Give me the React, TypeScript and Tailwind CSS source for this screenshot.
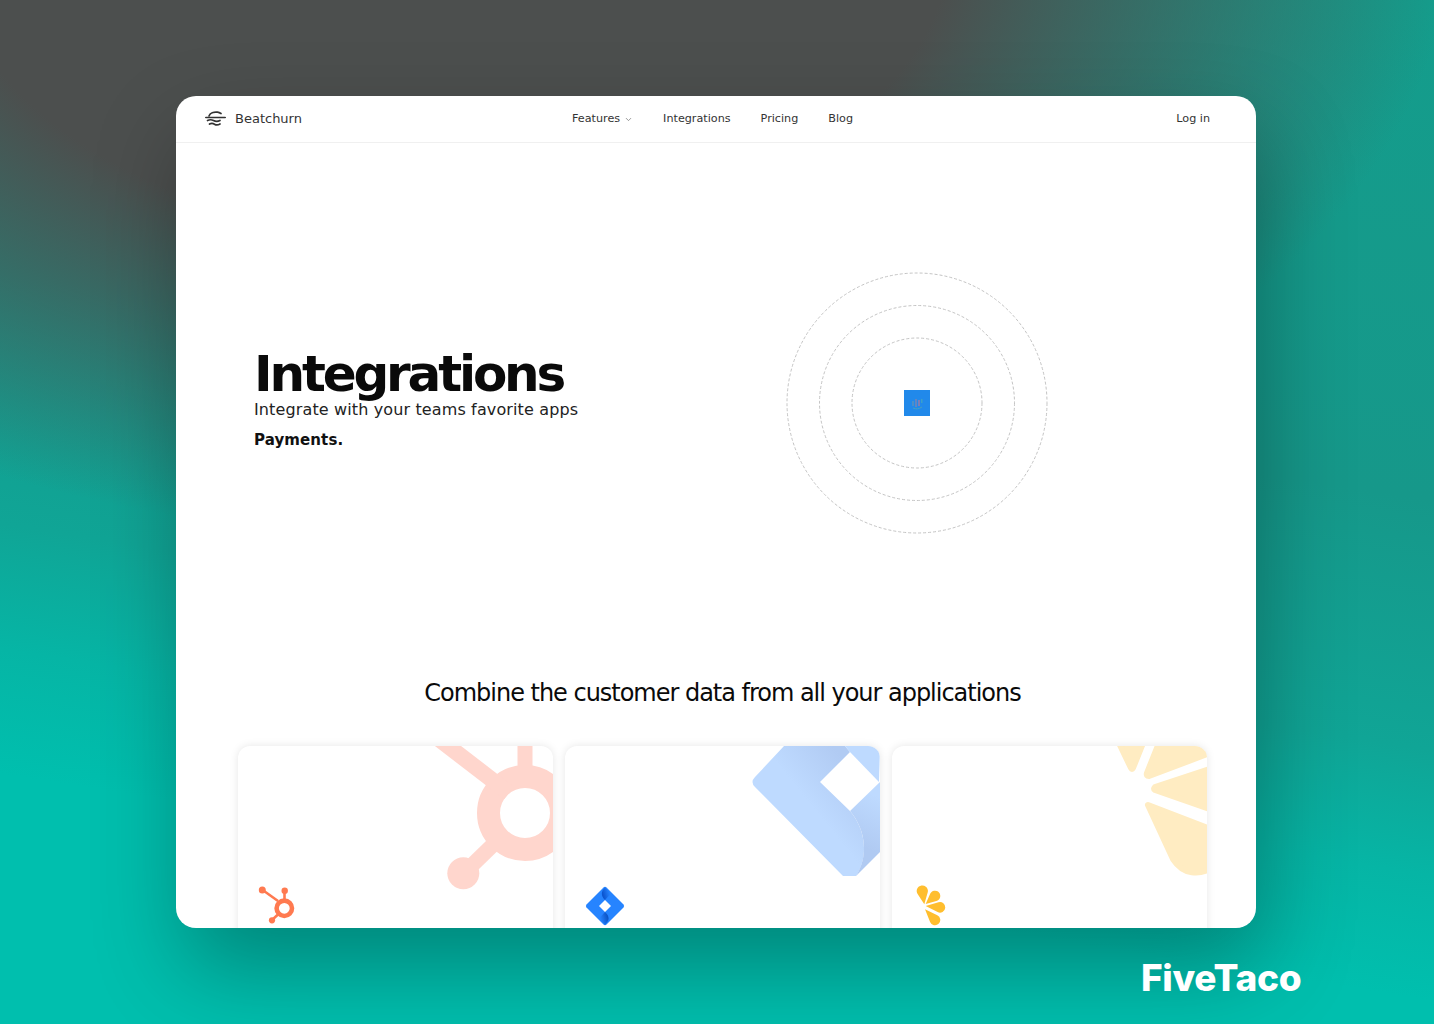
import React from "react";
import { ChevronDown } from "lucide-react";

// teardrop path: tip + circle, with tangents worked out from the tip
const tear = (cx: number, cy: number, r: number, tx: number, ty: number) => {
  const dx = cx - tx;
  const dy = cy - ty;
  const d = Math.hypot(dx, dy);
  const a = Math.atan2(dy, dx);
  const b = Math.asin(r / d);
  const l = Math.sqrt(d * d - r * r);
  const p1 = [tx + l * Math.cos(a - b), ty + l * Math.sin(a - b)];
  const p2 = [tx + l * Math.cos(a + b), ty + l * Math.sin(a + b)];
  return `M${tx} ${ty}L${p1[0]} ${p1[1]}A${r} ${r} 0 1 1 ${p2[0]} ${p2[1]}Z`;
};

const Logo = () => (
  <svg width="21" height="16" viewBox="0 0 21 16" fill="none" stroke="#333" strokeWidth="1.7" strokeLinecap="round">
    <path d="M4 5C5 2 9 .8 12.5 1.2c1.500.2 2.500.7 3.500 1.300" />
    <path d="M.8 6.500h19.400" />
    <path d="M2.500 9.500c2.500-1.200 4-1 6 0s4 1.200 6.500 0" />
    <path d="M4.500 13c2-1 3.500-.8 5 .2s3.500 1 5.500-.2" />
  </svg>
);

const BlueIcon = () => (
  <svg width="26" height="26" viewBox="0 0 26 26">
    <rect width="26" height="26" fill="#2189ea" />
    <rect x="8" y="11" width="2" height="5" fill="#4a8fc9" />
    <rect x="11" y="9" width="2" height="8" fill="#5f86c4" />
    <rect x="14" y="10" width="2" height="6" fill="#7c7fb8" />
    <rect x="17" y="9" width="1.500" height="4" fill="#3ba0c8" />
    <path d="M9 18c3 1.500 6 1 9-1" stroke="#45a0c0" strokeWidth="1" fill="none" />
  </svg>
);

const Rings = () => (
  <svg width="262" height="262" viewBox="0 0 262 262" fill="none" stroke="#c4c4c4" strokeWidth="1" strokeDasharray="3 2">
    <circle cx="131" cy="131" r="130" />
    <circle cx="131" cy="131" r="97.500" />
    <circle cx="131" cy="131" r="65" />
  </svg>
);

const HubspotBig = () => (
  <svg className="absolute top-0 left-0" width="315" height="150" viewBox="0 0 315 150" fill="none" stroke="#ffd6cd">
    <circle cx="287" cy="67" r="36.500" strokeWidth="23" />
    <path d="M287 0v24" strokeWidth="15" />
    <path d="M197 -10l74 57" strokeWidth="16" />
    <path d="M262 92l-36 35" strokeWidth="15" />
    <circle cx="225.300" cy="127.300" r="16" fill="#ffd6cd" stroke="none" />
  </svg>
);

const HubspotSmall = () => (
  <svg width="40" height="40" viewBox="0 0 40 40" fill="none" stroke="#ff7a50">
    <circle cx="26.300" cy="22.300" r="7.700" strokeWidth="4.600" />
    <path d="M26.500 6v9" strokeWidth="2.600" />
    <path d="M6 5l14 10" strokeWidth="2.600" />
    <path d="M20.500 28l-7 6.500" strokeWidth="2.600" />
    <circle cx="4.300" cy="4" r="3.500" fill="#ff7a50" stroke="none" />
    <circle cx="26.700" cy="4.700" r="3.200" fill="#ff7a50" stroke="none" />
    <circle cx="14" cy="34.300" r="3.100" fill="#ff7a50" stroke="none" />
  </svg>
);

const JiraBig = () => (
  <svg className="absolute top-0 left-0" width="315" height="130" viewBox="0 0 315 130">
    <defs>
      <linearGradient id="jiraTop" gradientUnits="userSpaceOnUse" x1="232" y1="42" x2="274" y2="8">
        <stop offset="0" stopColor="#bedaff" />
        <stop offset="1" stopColor="#b1cbf3" />
      </linearGradient>
      <linearGradient id="jiraRight" gradientUnits="userSpaceOnUse" x1="312" y1="50" x2="288" y2="95">
        <stop offset="0" stopColor="#bedaff" />
        <stop offset="1" stopColor="#b0caf2" />
      </linearGradient>
    </defs>
    <path d="M219 0L190 31Q185 36 190 41L278 130H291C303 112 302 85 285 65L255 36L285 6L280 0Z" fill="url(#jiraTop)" />
    <path d="M280 0L285 6L314 36L315 0Z" fill="#bedaff" />
    <path d="M285 65L315 36V106L291 130C303 112 302 85 285 65Z" fill="url(#jiraRight)" />
  </svg>
);

const JiraSmall = () => (
  <svg width="40" height="40" viewBox="0 0 40 40">
    <defs>
      <linearGradient id="jiraA" gradientUnits="userSpaceOnUse" x1="18" y1="9" x2="25" y2="7">
        <stop offset="0" stopColor="#0b55d0" />
        <stop offset="1" stopColor="#2684ff" />
      </linearGradient>
      <linearGradient id="jiraB" gradientUnits="userSpaceOnUse" x1="23" y1="31" x2="15" y2="33">
        <stop offset="0" stopColor="#0b52c4" />
        <stop offset="1" stopColor="#2684ff" />
      </linearGradient>
    </defs>
    <path d="M18.500 1.500Q20 .2 21.500 1.500L38.500 18.500Q39.800 20 38.500 21.500L21.500 38.500Q20 39.800 18.500 38.500L1.500 21.500Q.2 20 1.500 18.500Z" fill="#2684ff" />
    <path d="M20 14C15.500 10 16 5 20 1.500L26 7.500Z" fill="url(#jiraA)" />
    <path d="M20 26C25 30.500 24.500 34.500 20 38.500L14 32.500Z" fill="url(#jiraB)" />
    <path d="M20 14L26 20L20 26L14 20Z" fill="#fff" />
  </svg>
);

const LemonBig = () => (
  <svg className="absolute top-0 left-0" width="315" height="130" viewBox="0 0 315 130" fill="#ffecc2" stroke="#ffecc2" strokeWidth="6" strokeLinejoin="round">
    <path d="M227 -3H251L241 22Q240 24 239 22Z" />
    <path d="M267 -3H318V7L257 30Q254 30 255 27Z" />
    <path d="M318 23V63L263 44Q261 43 263 41Z" />
    <path d="M256 59L318 83V123C308 128 292 130 281 113Z" />
  </svg>
);

const LemonSmall = () => (
  <svg width="32" height="42" viewBox="0 0 32 42" fill="#ffbe2e">
    <path d={tear(7.3, 6, 5.6, 9.3, 19.3)} />
    <path d={tear(20, 11, 5.3, 10.7, 19)} />
    <path d={tear(25, 22.3, 5.3, 10.7, 21)} />
    <path d={tear(20, 35, 5.3, 10, 24.3)} />
  </svg>
);

const cards = [
  { big: <HubspotBig />, small: <HubspotSmall />, pos: "ml-[20px] mt-[140px]" },
  { big: <JiraBig />, small: <JiraSmall />, pos: "ml-[20px] mt-[140px]" },
  { big: <LemonBig />, small: <LemonSmall />, pos: "ml-[23px] mt-[139px]" },
];

export default function App() {
  return (
    <div className="relative h-[1024px] w-[1434px] overflow-hidden bg-[radial-gradient(ellipse_1000px_600px_at_450px_-60px,#4c4f4e_0%,#4c4f4e_50%,rgba(76,79,78,0)_100%),linear-gradient(189deg,#149d8c_0%,#16988a_40%,#10a596_60%,#06b5a5_70%,#00bfae_80%)] pt-[96px] pl-[176px] font-['DejaVu_Sans',sans-serif]">
      <div className="h-[832px] w-[1080px] overflow-hidden rounded-[20px] bg-white shadow-[8px_40px_90px_rgba(0,0,0,0.3)]">
        <header className="flex h-[47px] items-center border-b border-[#f0f0f0] pr-[46px] pl-[29px]">
          <div className="flex w-[367px] items-center gap-[9px]">
            <Logo />
            <span className="text-[13px] text-[#333]">Beatchurn</span>
          </div>
          <nav className="mt-[1px] flex items-center gap-[30px] text-[11.2px] text-[#333]">
            <span className="flex items-center gap-[4px]">
              Features
              <ChevronDown className="h-[9px] w-[9px] text-[#777]" />
            </span>
            <span>Integrations</span>
            <span>Pricing</span>
            <span>Blog</span>
          </nav>
          <span className="mt-[1px] ml-auto text-[11.2px] text-[#333]">Log in</span>
        </header>

        <section className="flex h-[534px]">
          <div className="w-[541px] pt-[203px] pl-[78px]">
            <h1 className="text-[50px] leading-[56px] font-bold tracking-[-3.15px] text-[#0a0a0a]">Integrations</h1>
            <p className="mt-[-2px] text-[16px] leading-[20px] tracking-[0.13px] text-[#222]">
              Integrate with your teams favorite apps
            </p>
            <p className="mt-[10px] text-[15px] leading-[20px] font-bold tracking-[0.1px] text-[#111]">Payments.</p>
          </div>
          <div className="pt-[129px] pl-[69px]">
            <div className="relative h-[262px] w-[262px]">
              <Rings />
              <div className="absolute top-[118px] left-[118px]">
                <BlueIcon />
              </div>
            </div>
          </div>
        </section>

        <h2 className="pl-[13px] text-center text-[24px] leading-[32px] tracking-[-1.02px] text-[#0a0a0a]">
          Combine the customer data from all your applications
        </h2>

        <div className="mt-[37px] ml-[62px] grid w-[969px] grid-cols-3 gap-[12.5px]">
          {cards.map((card, i) => (
            <div
              key={i}
              className="relative h-[260px] overflow-hidden rounded-[12px] bg-white shadow-[0_0_8px_rgba(0,0,0,0.1)]"
            >
              {card.big}
              <div className={card.pos}>{card.small}</div>
            </div>
          ))}
        </div>
      </div>

      <div className="absolute top-[955px] left-[1141px] font-['Inter',sans-serif] text-[37px] leading-[46px] font-extrabold tracking-[-0.3px] text-white">
        FiveTaco
      </div>
    </div>
  );
}
